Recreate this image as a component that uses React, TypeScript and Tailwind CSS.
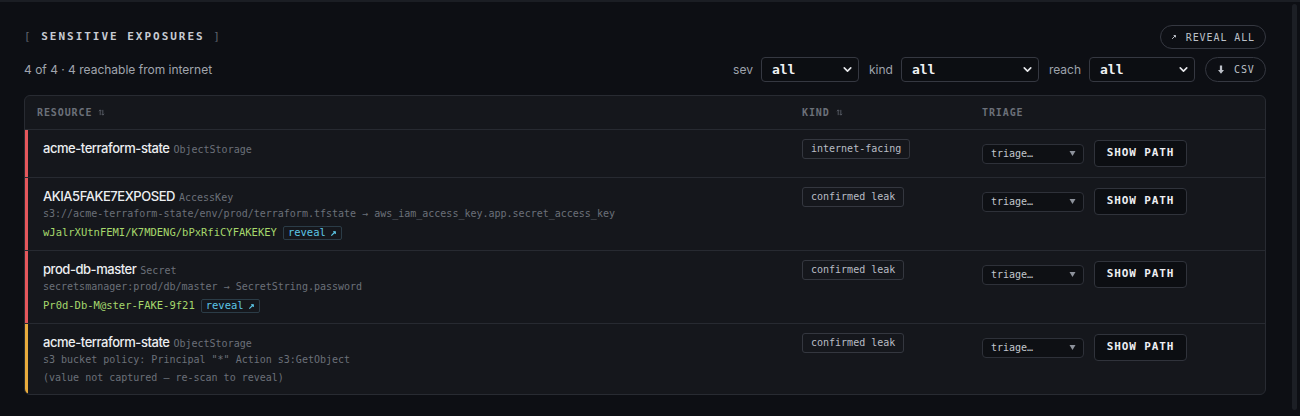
import React from 'react';
import { ChevronDown } from 'lucide-react';

type Exposure = {
  name: string;
  type: string;
  source?: string;
  secret?: string;
  note?: string;
  kind: string;
  severity: 'high' | 'medium';
};

const exposures: Exposure[] = [
  { name: 'acme-terraform-state', type: 'ObjectStorage', kind: 'internet-facing', severity: 'high' },
  {
    name: 'AKIA5FAKE7EXPOSED',
    type: 'AccessKey',
    source: 's3://acme-terraform-state/env/prod/terraform.tfstate → aws_iam_access_key.app.secret_access_key',
    secret: 'wJalrXUtnFEMI/K7MDENG/bPxRfiCYFAKEKEY',
    kind: 'confirmed leak',
    severity: 'high',
  },
  {
    name: 'prod-db-master',
    type: 'Secret',
    source: 'secretsmanager:prod/db/master → SecretString.password',
    secret: 'Pr0d-Db-M@ster-FAKE-9f21',
    kind: 'confirmed leak',
    severity: 'high',
  },
  {
    name: 'acme-terraform-state',
    type: 'ObjectStorage',
    source: 's3 bucket policy: Principal "*" Action s3:GetObject',
    note: '(value not captured — re-scan to reveal)',
    kind: 'confirmed leak',
    severity: 'medium',
  },
];

const mono = "font-['DejaVu_Sans_Mono',monospace]";
const sans = "font-['Inter',sans-serif]";

const TinyArrow = ({ className = '' }: { className?: string }) => (
  <svg viewBox="0 0 8 8" className={className} fill="none" stroke="currentColor" strokeWidth="1.3">
    <path d="M1.5 6.5 L6 2" />
    <path d="M3.5 2 H6 V4.5" />
  </svg>
);

const SortIcon = () => (
  <svg viewBox="0 0 8 8" className="w-[7px] h-[7px] ml-[6px] text-[#555a63]" fill="none" stroke="currentColor" strokeWidth="1.1">
    <path d="M2.5 7 V1 M1 2.5 L2.5 1 L4 2.5" />
    <path d="M5.5 1 V7 M4 5.5 L5.5 7 L7 5.5" />
  </svg>
);

const FilterSelect = ({ label, width }: { label: string; width: string }) => (
  <div className="flex items-center gap-[8px]">
    <span className={`${sans} text-[12px] text-[#9ea3ac]`}>{label}</span>
    <div className={`${width} h-[25px] flex items-center justify-between pl-[10px] pr-[4px] rounded-[4px] border border-[#353841] bg-[#0c0e12]`}>
      <span className={`${mono} text-[13px] font-bold text-[#f1f2f4]`}>all</span>
      <ChevronDown className="w-[13px] h-[13px] text-[#e6e7ea]" strokeWidth={3} />
    </div>
  </div>
);

const Row = ({ item, last }: { item: Exposure; last: boolean }) => (
  <div className={`grid grid-cols-[765px_180px_1fr] ${last ? '' : 'border-b border-[#272a31]'}`}>
    <div
      className={`border-l-[3px] pl-[15px] pr-3 pt-[9px] pb-[7px] ${item.severity === 'high' ? 'border-[#e5575c]' : 'border-[#e8ab3c]'}`}
    >
      <div className="flex items-baseline gap-[4px] h-[18px] leading-[18px]">
        <span className={`${sans} text-[13px] font-medium tracking-[-0.035em] text-[#eceef1]`}>{item.name}</span>
        <span className={`${mono} text-[10px] text-[#6b7079]`}>{item.type}</span>
      </div>
      {item.source && (
        <div className={`${mono} h-[18px] text-[10px] leading-[18px] text-[#6b7079] whitespace-nowrap`}>{item.source}</div>
      )}
      {item.secret && (
        <div className="flex items-center gap-[6px] h-[20px]">
          <span className={`${mono} text-[10.5px] text-[#a6d86c]`}>{item.secret}</span>
          <span
            className={`${mono} flex items-center gap-[4px] h-[14px] px-[4px] rounded-[2px] border border-[#2b3c47] text-[10.5px] text-[#5cc6e6]`}
          >
            reveal
            <TinyArrow className="w-[7px] h-[7px]" />
          </span>
        </div>
      )}
      {item.note && <div className={`${mono} h-[18px] text-[10px] leading-[18px] text-[#6b7079]`}>{item.note}</div>}
    </div>
    <div className="px-3 pt-[9px] flex items-start">
      <span
        className={`${mono} h-[20px] leading-[18px] px-[8px] rounded-[3px] border border-[#34373f] text-[10px] text-[#b9bdc5]`}
      >
        {item.kind}
      </span>
    </div>
    <div className="px-3 pt-[10px] pb-[10px]">
      <div className="flex items-center gap-[10px]">
        <div className="w-[102px] h-[20px] flex items-center justify-between pl-[8px] pr-[7px] rounded-[4px] border border-[#2e3139] bg-[#0e1014]">
          <span className={`${mono} text-[10px] text-[#c3c7ce]`}>triage…</span>
          <svg viewBox="0 0 6 5" className="w-[7px] h-[5px] text-[#8d929b]" fill="currentColor">
            <path d="M0 0 H6 L3 5 Z" />
          </svg>
        </div>
        <button
          className={`${mono} w-[93px] h-[27px] rounded-[4px] border border-[#30333b] bg-[#0c0e12] text-[11px] font-bold tracking-[0.08em] text-[#eeeff2]`}
        >
          SHOW PATH
        </button>
      </div>
    </div>
  </div>
);

export default function App() {
  return (
    <div className="min-h-screen flex bg-[#0d0f14] border-t-2 border-[#1b1e24]">
      <div className="flex-1 pl-6 pr-6 pt-[23px] pb-[20px]">
        {/* title + bulk action */}
        <div className="flex items-center justify-between">
          <h2 className={`${mono} text-[11px] font-bold tracking-[0.18em] text-[#c7cbd3]`}>
            <span className="font-normal text-[#60646e]">[ </span>
            SENSITIVE EXPOSURES
            <span className="font-normal text-[#60646e]"> ]</span>
          </h2>
          <button
            className={`${mono} flex items-center gap-[9px] h-[24px] pl-[10px] pr-[10px] rounded-full border border-[#353841] text-[10px] tracking-[0.09em] text-[#bcc0c8]`}
          >
            <TinyArrow className="w-[6px] h-[6px]" />
            REVEAL ALL
          </button>
        </div>

        {/* summary + filters */}
        <div className="flex items-center justify-between mt-[8px]">
          <span className={`${sans} text-[12px] text-[#a0a5ae]`}>4 of 4 · 4 reachable from internet</span>
          <div className="flex items-center gap-[10px]">
            <FilterSelect label="sev" width="w-[98px]" />
            <FilterSelect label="kind" width="w-[138px]" />
            <FilterSelect label="reach" width="w-[106px]" />
            <button
              className={`${mono} flex items-center gap-[10px] h-[25px] w-[61px] pl-[12px] rounded-full border border-[#353841] text-[10px] tracking-[0.09em] text-[#bcc0c8]`}
            >
              <svg viewBox="0 0 8 11" className="w-[6px] h-[9px]" fill="currentColor">
                <path d="M2.5 0 H5.5 V6 H8 L4 11 L0 6 H2.5 Z" />
              </svg>
              CSV
            </button>
          </div>
        </div>

        {/* exposures table */}
        <div className="mt-[13px] rounded-[6px] border border-[#282b32] bg-[#15171c] overflow-hidden">
          <div
            className={`${mono} grid grid-cols-[765px_180px_1fr] h-[34px] items-center border-b border-[#272a31] text-[10px] font-bold tracking-[0.09em] text-[#6b7079]`}
          >
            <div className="px-3 flex items-center">
              RESOURCE
              <SortIcon />
            </div>
            <div className="px-3 flex items-center">
              KIND
              <SortIcon />
            </div>
            <div className="px-3">TRIAGE</div>
          </div>
          {exposures.map((item, i) => (
            <Row key={i} item={item} last={i === exposures.length - 1} />
          ))}
        </div>
      </div>

      {/* scrollbar */}
      <div className="w-[10px] pl-[2px] pr-[3px] pt-[2px] pb-[6px]">
        <div className="h-full rounded-full bg-[#1c1f25]" />
      </div>
    </div>
  );
}
